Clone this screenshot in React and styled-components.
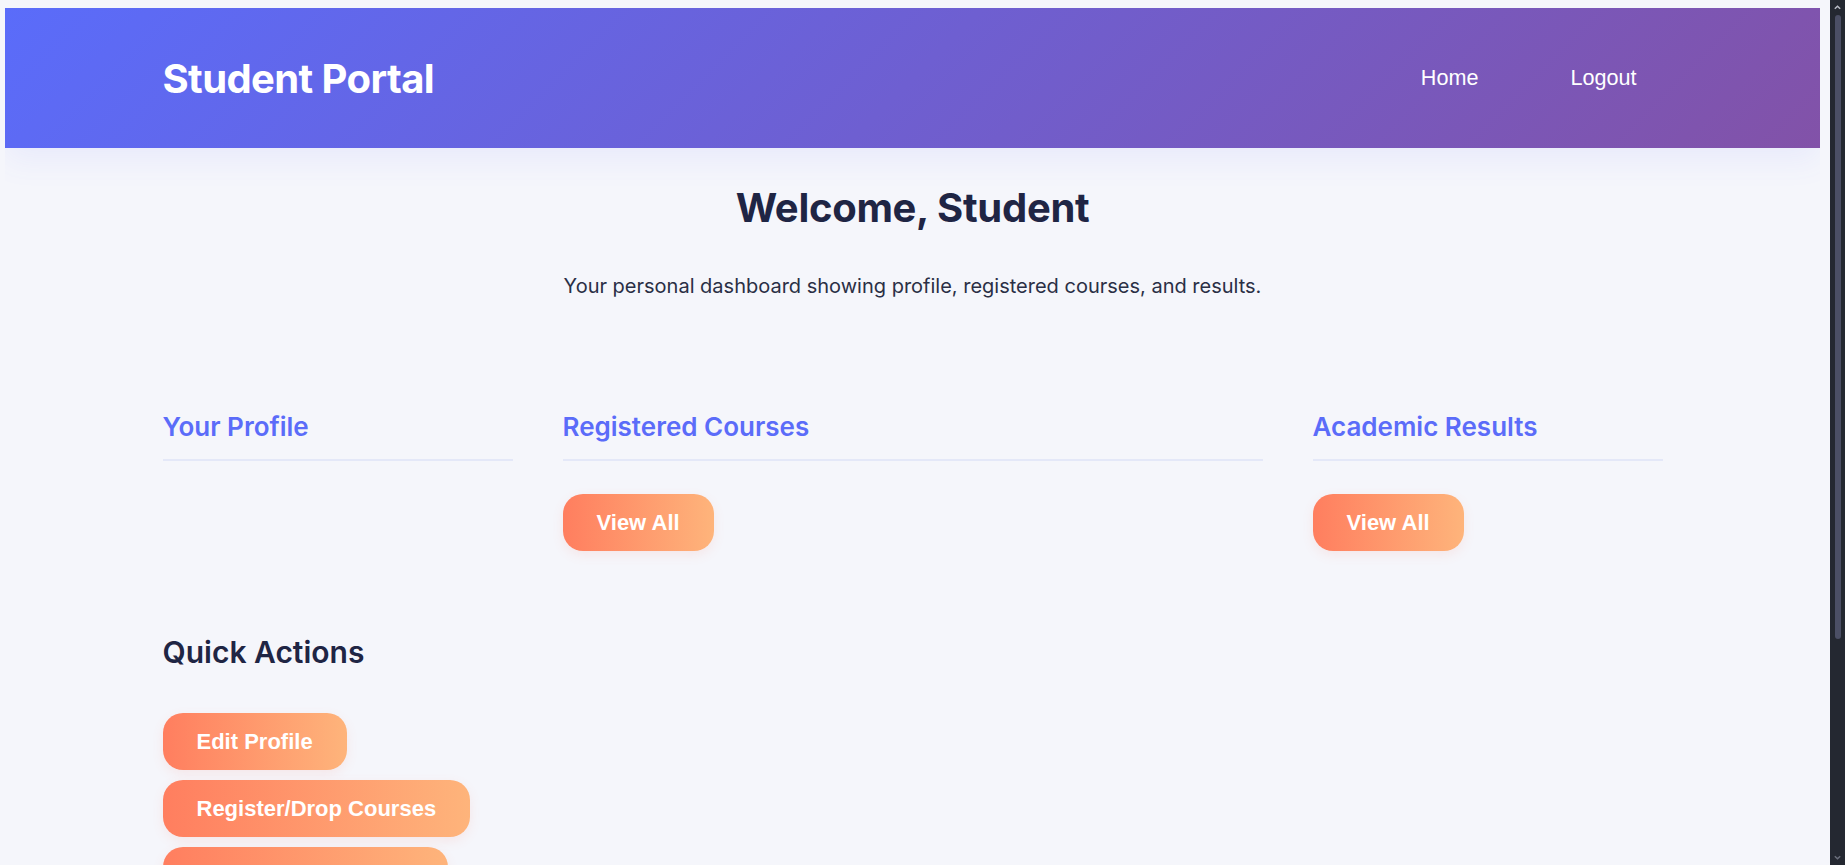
import React from "react";
import styled, { createGlobalStyle } from "styled-components";

const GlobalStyle = createGlobalStyle`
  html {
    scrollbar-width: none;
  }
  body {
    margin: 8px 25px 8px 5px;
    background: #f5f6fb;
    font-family: Inter, "Noto Sans", sans-serif;
    color: #1f2544;
  }
`;

const Header = styled.header`
  height: 140px;
  background: linear-gradient(135deg, #5a6cfa 0%, #8252a8 100%);
  box-shadow: 0 12px 30px rgba(91, 108, 249, 0.08);
  display: flex;
  justify-content: center;
`;

const HeaderInner = styled.div`
  width: 1500px;
  display: flex;
  align-items: center;
  justify-content: space-between;
`;

const Brand = styled.h1`
  margin: 0;
  font-family: Inter, sans-serif;
  font-size: 40px;
  font-weight: 700;
  letter-spacing: -0.6px;
  color: #ffffff;
`;

const Nav = styled.nav`
  display: flex;
  gap: 40px;
`;

const NavLink = styled.a`
  padding: 0 26px;
  font-family: "Liberation Sans", Arial, sans-serif;
  font-size: 21.6px;
  color: #ffffff;
  text-decoration: none;
`;

const Main = styled.main`
  width: 1500px;
  margin: 0 auto;
  padding-bottom: 112px;
`;

const Title = styled.h2`
  margin: 36px 0 0;
  text-align: center;
  font-size: 40px;
  line-height: 48px;
  font-weight: 700;
  letter-spacing: -0.3px;
  color: #1f2544;
`;

const Subtitle = styled.p`
  margin: 39px 0 0;
  text-align: center;
  font-size: 20px;
  line-height: 30px;
  color: #2a2f45;
`;

const Grid = styled.section`
  margin-top: 110px;
  display: grid;
  grid-template-columns: 1fr 2fr 1fr;
  gap: 50px;
  align-items: start;
`;

const Card = styled.div`
  display: flex;
  flex-direction: column;
  align-items: flex-start;
`;

const CardTitle = styled.h3`
  align-self: stretch;
  margin: 0;
  padding-bottom: 16px;
  border-bottom: 2px solid #e4e8f8;
  font-size: 26px;
  line-height: 32px;
  font-weight: 600;
  color: #5b6cf9;
`;

const GradientButton = styled.button`
  margin-top: ${(p) => p.$top || 0}px;
  border: none;
  border-radius: 20px;
  padding: 16px 34px;
  background: linear-gradient(90deg, #ff7e5f 0%, #feb47b 100%);
  box-shadow: 0 4px 12px rgba(255, 126, 95, 0.12);
  font-family: "Liberation Sans", Arial, sans-serif;
  font-size: 22px;
  line-height: 25px;
  font-weight: 700;
  color: #ffffff;
  cursor: pointer;
`;

const SectionTitle = styled.h3`
  margin: 83px 0 0;
  font-size: 30px;
  line-height: 36px;
  font-weight: 600;
  color: #1f2544;
`;

const Actions = styled.div`
  margin-top: 43px;
  display: flex;
  flex-direction: column;
  align-items: flex-start;
  gap: 10px;
`;

const ScrollTrack = styled.div`
  position: fixed;
  top: 0;
  right: 0;
  width: 15px;
  height: 100vh;
  background: #242831;
  display: flex;
  flex-direction: column;
  align-items: center;
`;

const ScrollArrow = styled.svg`
  width: 9px;
  height: 9px;
  flex: none;
  margin: 3px 0;
`;

const ScrollThumb = styled.div`
  width: 6px;
  height: 624px;
  border-radius: 3px;
  background: #4b4f65;
`;

const Spacer = styled.div`
  flex: 1;
`;

export default function App() {
  return (
    <>
      <GlobalStyle />
      <Header>
        <HeaderInner>
          <Brand>Student Portal</Brand>
          <Nav>
            <NavLink href="#">Home</NavLink>
            <NavLink href="#">Logout</NavLink>
          </Nav>
        </HeaderInner>
      </Header>
      <Main>
        <Title>Welcome, Student</Title>
        <Subtitle>
          Your personal dashboard showing profile, registered courses, and results.
        </Subtitle>
        <Grid>
          <Card>
            <CardTitle>Your Profile</CardTitle>
          </Card>
          <Card>
            <CardTitle>Registered Courses</CardTitle>
            <GradientButton $top={33}>View All</GradientButton>
          </Card>
          <Card>
            <CardTitle>Academic Results</CardTitle>
            <GradientButton $top={33}>View All</GradientButton>
          </Card>
        </Grid>
        <SectionTitle>Quick Actions</SectionTitle>
        <Actions>
          <GradientButton>Edit Profile</GradientButton>
          <GradientButton>Register/Drop Courses</GradientButton>
          <GradientButton>Download Transcript</GradientButton>
        </Actions>
      </Main>
      <ScrollTrack aria-hidden="true">
        <ScrollArrow viewBox="0 0 10 10">
          <path d="M2 6.5 L5 3.5 L8 6.5" fill="none" stroke="#b9bcc6" strokeWidth="1.6" />
        </ScrollArrow>
        <ScrollThumb />
        <Spacer />
        <ScrollArrow viewBox="0 0 10 10">
          <path d="M2 3.5 L5 6.5 L8 3.5" fill="none" stroke="#6b6f7c" strokeWidth="1.6" />
        </ScrollArrow>
      </ScrollTrack>
    </>
  );
}
